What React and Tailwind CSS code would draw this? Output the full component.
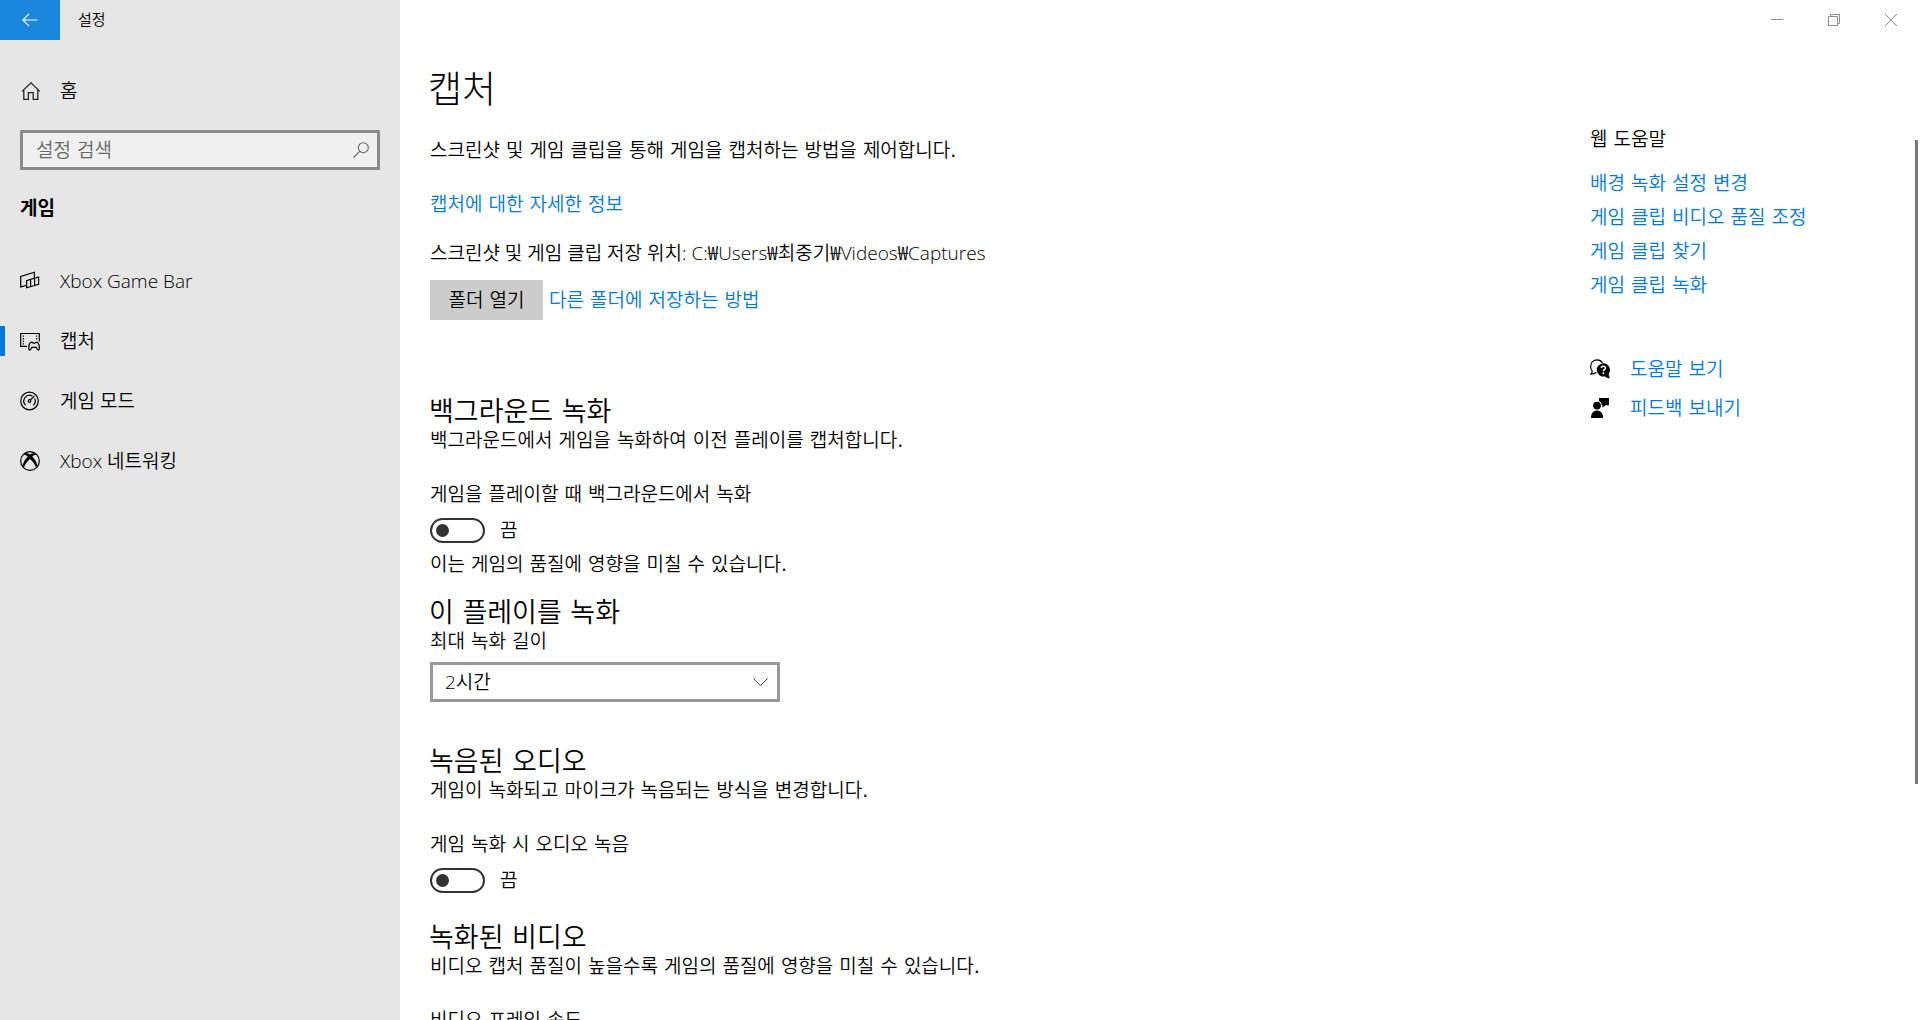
import React from "react";

const navItems = [
  { label: "Xbox Game Bar", icon: GameBarIcon },
  { label: "캡처", icon: CaptureIcon, active: true },
  { label: "게임 모드", icon: GameModeIcon },
  { label: "Xbox 네트워킹", icon: XboxIcon },
];

const helpLinks = [
  "배경 녹화 설정 변경",
  "게임 클립 비디오 품질 조정",
  "게임 클립 찾기",
  "게임 클립 녹화",
];

function HomeIcon() {
  return (
    <svg width="20" height="20" viewBox="0 0 20 20" fill="none" stroke="#222" strokeWidth="1.3">
      <path d="M2 10.4 11 1.8l8.800 8.600M3.800 9v9.300h4.600v-6.600h4.800v6.600h4.600V9" />
    </svg>
  );
}

function GameBarIcon() {
  return (
    <svg width="20" height="20" viewBox="0 0 20 20" fill="none" stroke="#000" strokeWidth="1.2">
      <path d="M6.3 14.5.7 15.9V5.4l13.7-4.1v6" />
      <path d="M6.6 9.6 18.6 6v7.2L6.6 16.8zM10.6 8.4v7.2M14.6 7.2v7.2" />
    </svg>
  );
}

function CaptureIcon() {
  return (
    <svg width="20" height="20" viewBox="0 0 20 20" fill="none" stroke="#000" strokeWidth="1.2">
      <path d="M7 15.4H.7V2.5h18.6v8" />
      <path d="M3.400 4.500v10M16.600 4.500v5" strokeDasharray="1.3 1.3" />
      <path d="M10.400 11.400h2.200l.6.700h1.800l.6-.7h2.100c1.100 1.300 1.700 4.200 1.600 6.300-.1 1.700-1.400 1.800-2 .6l-1-2h-4.500l-1 2c-.6 1.200-1.900 1.100-2-.6-.1-2.100.5-5 1.600-6.300z" />
    </svg>
  );
}

function GameModeIcon() {
  return (
    <svg width="20" height="20" viewBox="0 0 20 20" fill="none" stroke="#000" strokeWidth="1.2">
      <circle cx="9.5" cy="10" r="8.8" />
      <path d="M5.600 14.200A5.800 5.800 0 0 1 12.300 4.900M14.700 7.500a5.800 5.800 0 0 1-1.300 6.700" />
      <path d="m10.300 9.200 4-4.200" />
      <circle cx="9.5" cy="10" r="1.3" />
    </svg>
  );
}

function XboxIcon() {
  return (
    <svg width="20" height="20" viewBox="0 0 20 20">
      <circle cx="10" cy="10" r="9.3" fill="none" stroke="#000" strokeWidth="1.2" />
      <path d="M4.800 2.600C6.600 2 8.400 2.500 10 3.500c1.600-1 3.400-1.500 5.200-.9l1 1.200c-1.400-.2-2.700.6-3.900 1.800 2.500 2.700 5 6.300 5 9.900l-1.200 1.200c-.7-3.200-3.200-6.200-6.100-8.800-2.900 2.600-5.400 5.600-6.100 8.800l-1.200-1.200c0-3.600 2.500-7.200 5-9.900-1.200-1.200-2.500-2-3.900-1.800z" />
    </svg>
  );
}

function HelpIcon() {
  return (
    <svg width="20" height="20" viewBox="0 0 20 20">
      <path
        d="M6.300 13.200c-1.500 1.200-3.300 1.900-5.500 1.900 1-.9 1.500-1.900 1.500-3A6.200 6.200 0 0 1 .7 7.200C.7 3.600 3.400.9 7 .9c2.500 0 4.300 1.100 5.400 3"
        fill="none"
        stroke="#000"
        strokeWidth="1.2"
      />
      <path d="M13.300 4.200a6.700 6.700 0 0 1 5.500 10.400c-.1 1.700.2 3 1.200 4.700-2-.1-3.700-.8-4.900-1.900A6.700 6.700 0 1 1 13.300 4.200z" />
      <path
        d="M11.300 9c.1-2.400 4.200-2.400 4.200 0 0 1.600-2.100 1.600-2.100 3.200"
        fill="none"
        stroke="#fff"
        strokeWidth="1.4"
      />
      <circle cx="13.4" cy="14.3" r="1" fill="#fff" />
    </svg>
  );
}

function FeedbackIcon() {
  return (
    <svg width="20" height="20" viewBox="0 0 20 20">
      <path d="M9 0h10v7.200h-3.600l-2.900 2.500V7.200h-.9c0-2.100-.9-3.600-2.600-4.300z" />
      <circle cx="7" cy="7.6" r="3.9" />
      <path d="M1 20c0-4.800 2.200-7.600 6-7.600s6.100 2.800 6.100 7.600z" />
    </svg>
  );
}

function Sidebar() {
  return (
    <aside className="w-[400px] shrink-0 bg-[#e6e6e6]">
      <div className="flex h-10 items-center">
        <button aria-label="뒤로" className="flex h-10 w-[60px] items-center justify-center bg-[#1a86dc]">
          <svg width="16" height="14" viewBox="0 0 16 14" fill="none" stroke="#fff" strokeWidth="1.2">
            <path d="M15.500 7H1M7 .8.900 7 7 13.200" />
          </svg>
        </button>
        <span className="pl-[18px] text-[15px]">설정</span>
      </div>

      <a href="#home" className="mt-[31px] flex h-10 items-center gap-5 pl-5 text-[19px]">
        <HomeIcon />
        <span>홈</span>
      </a>

      {/* 설정 검색 */}
      <div className="relative mx-5 mt-[19px]">
        <input
          type="text"
          aria-label="설정 검색"
          placeholder="설정 검색"
          className="block h-10 w-full border-[3px] border-[#8a8a8a] bg-[#f0f0f0] pr-10 pl-[13px] text-[19px] outline-none placeholder:text-[#666]"
        />
        <svg
          className="absolute top-3 right-[11px]"
          width="16"
          height="16"
          viewBox="0 0 16 16"
          fill="none"
          stroke="#666"
          strokeWidth="1.1"
        >
          <circle cx="10.3" cy="5.7" r="5" />
          <path d="M6.700 9.300.5 15.500" />
        </svg>
      </div>

      <h2 className="mt-[25px] pl-5 font-['Noto_Sans_CJK_KR',sans-serif] text-[19px] leading-6 font-bold">게임</h2>

      <nav className="mt-[42px] flex flex-col gap-5">
        {navItems.map(({ label, icon: Icon, active }) => (
          <a key={label} href="#nav" className="relative flex h-10 items-center gap-5 pl-5 text-[19px]">
            {active && <span className="absolute left-0 h-[30px] w-[5px] bg-[#0078d7]" />}
            <Icon />
            <span className="font-['Open_Sans','Noto_Sans_CJK_KR_DemiLight','Noto_Sans_CJK_KR',sans-serif] font-[350]">
              {label}
            </span>
          </a>
        ))}
      </nav>
    </aside>
  );
}

function WindowButtons() {
  return (
    <div className="flex h-10 justify-end pr-px text-[#8a8a8a]">
      <button aria-label="최소화" className="flex w-[57px] items-center justify-center">
        <svg width="12" height="12" viewBox="0 0 12 12" stroke="currentColor">
          <path d="M0 5.500h12" />
        </svg>
      </button>
      <button aria-label="이전 크기로 복원" className="flex w-[57px] items-center justify-center">
        <svg width="12" height="12" viewBox="0 0 12 12" fill="none" stroke="currentColor">
          <path d="M.5 2.500h9v9h-9zM2.500 2.500v-2h9v9h-2" />
        </svg>
      </button>
      <button aria-label="닫기" className="flex w-[57px] items-center justify-center">
        <svg width="12" height="12" viewBox="0 0 12 12" stroke="currentColor">
          <path d="m0 0 12 12M12 0 0 12" />
        </svg>
      </button>
    </div>
  );
}

function Toggle({ id, label }) {
  return (
    <div>
      <label htmlFor={id} className="mt-[30px] block">
        {label}
      </label>
      <div className="mt-[11px] flex h-[26px] items-center gap-[15px]">
        <input
          id={id}
          type="checkbox"
          role="switch"
          className="flex h-[25px] w-[55px] appearance-none items-center rounded-full border-2 border-[#333] pl-1 before:size-[13px] before:rounded-full before:bg-[#333]"
        />
        <span>끔</span>
      </div>
    </div>
  );
}

function SectionTitle({ children }) {
  return <h2 className="-ml-px text-[27px] leading-8">{children}</h2>;
}

function Captures() {
  return (
    <main className="min-w-0 flex-1">
      <h1 className="-ml-[2px] font-['DejaVu_Sans','Noto_Sans_CJK_KR',sans-serif] text-[37px] leading-[54px] font-light">
        캡처
      </h1>
      <p className="mt-5">스크린샷 및 게임 클립을 통해 게임을 캡처하는 방법을 제어합니다.</p>
      <a href="#more" className="mt-[30px] block text-[#0078d7]">
        캡처에 대한 자세한 정보
      </a>
      <p className="mt-[25px] font-['Open_Sans','Noto_Sans_CJK_KR_DemiLight','Noto_Sans_CJK_KR',sans-serif] font-[350]">
        스크린샷 및 게임 클립 저장 위치: C:₩Users₩최중기₩Videos₩Captures
      </p>
      <div className="mt-[15px] flex items-center gap-[6px]">
        <button className="h-10 w-[113px] bg-[#ccc]">폴더 열기</button>
        <a href="#folder" className="text-[#0078d7]">
          다른 폴더에 저장하는 방법
        </a>
      </div>

      <section className="mt-[76px]">
        <SectionTitle>백그라운드 녹화</SectionTitle>
        <p>백그라운드에서 게임을 녹화하여 이전 플레이를 캡처합니다.</p>
        <Toggle id="background" label="게임을 플레이할 때 백그라운드에서 녹화" />
        <p className="mt-[9px]">이는 게임의 품질에 영향을 미칠 수 있습니다.</p>
      </section>

      <section className="mt-[21px]">
        <SectionTitle>이 플레이를 녹화</SectionTitle>
        <label htmlFor="length" className="block">
          최대 녹화 길이
        </label>
        <div className="relative mt-[9px] w-[350px]">
          <select
            id="length"
            className="block h-10 w-full appearance-none border-[3px] border-[#999] bg-white pl-3 font-['Open_Sans','Noto_Sans_CJK_KR_DemiLight','Noto_Sans_CJK_KR',sans-serif] font-[350]"
          >
            <option>2시간</option>
          </select>
          <svg
            className="pointer-events-none absolute top-4 right-3"
            width="15"
            height="9"
            viewBox="0 0 15 9"
            fill="none"
            stroke="#444"
          >
            <path d="m.5.500 7 7.200 7-7.200" />
          </svg>
        </div>
      </section>

      <section className="mt-11">
        <SectionTitle>녹음된 오디오</SectionTitle>
        <p>게임이 녹화되고 마이크가 녹음되는 방식을 변경합니다.</p>
        <Toggle id="audio" label="게임 녹화 시 오디오 녹음" />
      </section>

      <section className="mt-[29px]">
        <SectionTitle>녹화된 비디오</SectionTitle>
        <p>비디오 캡처 품질이 높을수록 게임의 품질에 영향을 미칠 수 있습니다.</p>
        <p className="mt-[30px]">비디오 프레임 속도</p>
      </section>
    </main>
  );
}

function HelpPanel() {
  return (
    <aside className="mt-[63px] w-[330px] shrink-0">
      <h2>웹 도움말</h2>
      <ul className="mt-5 flex flex-col gap-[10px] text-[#0078d7]">
        {helpLinks.map((link) => (
          <li key={link}>
            <a href="#help">{link}</a>
          </li>
        ))}
      </ul>
      <div className="mt-[60px] flex flex-col gap-[15px] text-[#0078d7]">
        <a href="#gethelp" className="flex items-center gap-5">
          <HelpIcon />
          도움말 보기
        </a>
        <a href="#feedback" className="flex items-center gap-5">
          <FeedbackIcon />
          피드백 보내기
        </a>
      </div>
    </aside>
  );
}

function App() {
  return (
    <div className="flex h-screen overflow-hidden bg-white font-['DejaVu_Sans','Noto_Sans_CJK_KR_DemiLight','Noto_Sans_CJK_KR',sans-serif] text-black">
      <Sidebar />
      <div className="relative min-w-0 flex-1">
        <WindowButtons />
        <div className="flex pt-6 pl-[30px] text-[19px] leading-6">
          <Captures />
          <HelpPanel />
        </div>
        {/* Scrollbar */}
        <div className="absolute top-[140px] right-[2px] h-[644px] w-[3px] bg-[#7a7a7a]" />
      </div>
    </div>
  );
}

export default App;
